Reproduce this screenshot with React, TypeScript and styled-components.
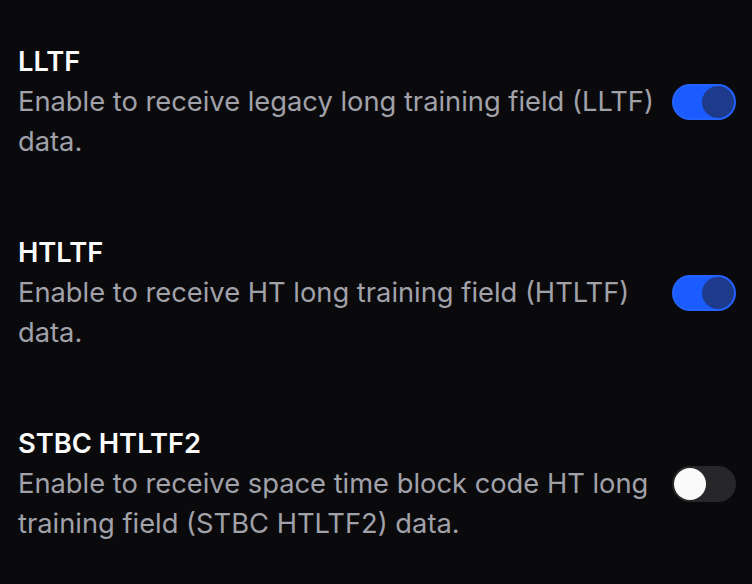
import React, { useState } from "react";
import styled, { createGlobalStyle } from "styled-components";

const Global = createGlobalStyle`
  html, body { margin: 0; padding: 0; background: #0a0a0c; }
  body { font-family: Inter, "Noto Sans", "Liberation Sans", sans-serif; -webkit-font-smoothing: antialiased; }
`;

const Page = styled.div`
  width: 752px;
  height: 584px;
  box-sizing: border-box;
  background: #0a0a0c;
  padding: 42px 16px 0 18px;
  display: flex;
  flex-direction: column;
  gap: 72px;
`;

const Row = styled.div`
  display: flex;
  align-items: center;
  gap: 18px;
`;

const TextCol = styled.div`
  flex: 1;
  min-width: 0;
  display: flex;
  flex-direction: column;
`;

const Title = styled.div`
  font-size: 27.3px;
  line-height: 40px;
  font-weight: 600;
  color: #fafafa;
`;

const Desc = styled.div`
  font-size: 27.3px;
  line-height: 39.5px;
  font-weight: 400;
  color: #a1a1aa;
`;

const Track = styled.button<{ $on: boolean }>`
  flex: none;
  width: 64px;
  height: 36px;
  padding: 0;
  box-sizing: border-box;
  border-radius: 18px;
  border: 2px solid ${(p) => (p.$on ? "#2463ff" : "#27272a")};
  background: ${(p) => (p.$on ? "#1a5cff" : "#27272a")};
  display: flex;
  align-items: center;
  justify-content: ${(p) => (p.$on ? "flex-end" : "flex-start")};
  cursor: pointer;
`;

const Knob = styled.span<{ $on: boolean }>`
  width: 32px;
  height: 32px;
  border-radius: 50%;
  background: ${(p) => (p.$on ? "#1e3a8a" : "#fafafa")};
`;

const items = [
  { title: "LLTF", desc: "Enable to receive legacy long training field (LLTF) data.", on: true },
  { title: "HTLTF", desc: "Enable to receive HT long training field (HTLTF) data.", on: true },
  {
    title: "STBC HTLTF2",
    desc: "Enable to receive space time block code HT long training field (STBC HTLTF2) data.",
    on: false,
  },
];

export default function App() {
  const [state, setState] = useState(items.map((i) => i.on));
  return (
    <>
      <Global />
      <Page>
        {items.map((it, i) => (
          <Row key={it.title}>
            <TextCol>
              <Title>{it.title}</Title>
              <Desc>{it.desc}</Desc>
            </TextCol>
            <Track
              $on={state[i]}
              onClick={() => setState((s) => s.map((v, j) => (j === i ? !v : v)))}
            >
              <Knob $on={state[i]} />
            </Track>
          </Row>
        ))}
      </Page>
    </>
  );
}
